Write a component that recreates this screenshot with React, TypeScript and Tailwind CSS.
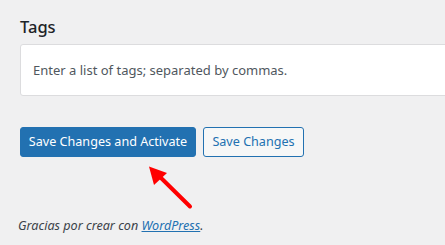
export default function App() {
  return (
    <div className="relative h-[245px] w-[445px] overflow-hidden bg-[#f0f0f1] font-['Noto_Sans',sans-serif] text-[#3c434a]">
      <div className="pl-5 pt-[15px]">
        <h2 className="text-[16.5px] font-medium leading-[24px] text-[#1d2327]">Tags</h2>
        <div className="mt-[5px] flex h-[52px] w-[460px] items-center rounded-[3px] border border-[#dcdcde] bg-white px-3">
          <p className="pt-px text-[13px] text-[#50575e]">Enter a list of tags; separated by commas.</p>
        </div>

        <div className="mt-[31px] flex gap-[7px]">
          <button
            type="button"
            className="flex h-[30px] w-[176px] items-center justify-center rounded-[3px] border border-[#2271b1] bg-[#2271b1] text-[12.6px] text-white"
          >
            Save Changes and Activate
          </button>
          <button
            type="button"
            className="flex h-[30px] w-[101px] items-center justify-center rounded-[3px] border border-[#2271b1] bg-[#f6f7f7] text-[12.6px] text-[#2271b1]"
          >
            Save Changes
          </button>
        </div>

        <p className="-ml-0.5 mt-[60px] text-[12.6px] italic">
          Gracias por crear con{" "}
          <a href="#" className="text-[#2271b1] underline">
            WordPress
          </a>
          .
        </p>
      </div>

      {/* red pointer arrow */}
      <svg className="absolute left-[140px] top-[160px]" width="60" height="55" viewBox="0 0 60 55" aria-hidden="true">
        <line x1="50" y1="46.5" x2="16" y2="13" stroke="#ff0000" strokeWidth="4" strokeLinecap="round" />
        <polygon points="9,6.5 27,13 14,25" fill="#ff0000" />
      </svg>
    </div>
  );
}
